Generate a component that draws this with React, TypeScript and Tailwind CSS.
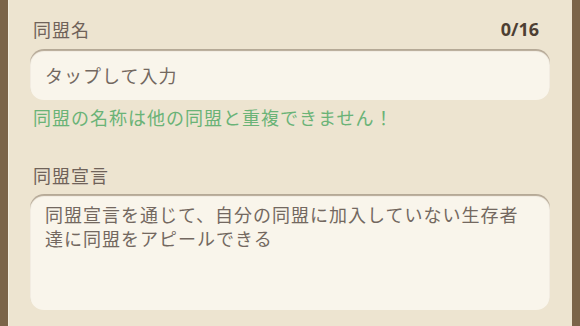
import React from "react";

export default function App() {
  const jp = { fontFamily: '"Noto Sans CJK JP", "Noto Sans", sans-serif' };
  return (
    <div className="w-[580px] h-[326px] bg-[#7b6449] flex px-[8px] overflow-hidden" style={jp}>
      <div className="flex-1 bg-[#ede4d0] flex flex-col px-[22px] pt-[17px] shadow-[inset_1px_0_0_#f4eddf]">
        <div className="flex items-center justify-between h-[24px]">
          <span className="text-[18px] leading-[24px] tracking-[1px] text-[#6f6259] pl-[3px]">同盟名</span>
          <span
            className="text-[18px] leading-[24px] font-bold text-[#4d3f33] pr-[11px]"
            style={{ fontFamily: '"Open Sans", "Noto Sans", sans-serif' }}
          >
            0/16
          </span>
        </div>
        <div className="mt-[8px] h-[51px] rounded-[14px] bg-[#f9f5eb] shadow-[inset_0_2px_1px_rgba(125,105,80,0.55)] flex items-center pl-[15px]">
          <span className="text-[18px] leading-[24px] tracking-[1px] text-[#736860]">タップして入力</span>
        </div>
        <div className="mt-[5px] text-[18px] leading-[24px] tracking-[1px] text-[#6ab377] pl-[3px]">
          同盟の名称は他の同盟と重複できません！
        </div>
        <div className="mt-[34px] text-[18px] leading-[24px] tracking-[1px] text-[#6f6259] pl-[3px]">同盟宣言</div>
        <div className="mt-[7px] h-[116px] rounded-[14px] bg-[#f9f5eb] shadow-[inset_0_2px_1px_rgba(125,105,80,0.55)] pl-[15px] pr-[20px] pt-[8px]">
          <p className="text-[18px] leading-[24px] tracking-[1px] text-[#736860]">
            同盟宣言を通じて、自分の同盟に加入していない生存者達に同盟をアピールできる
          </p>
        </div>
      </div>
    </div>
  );
}
